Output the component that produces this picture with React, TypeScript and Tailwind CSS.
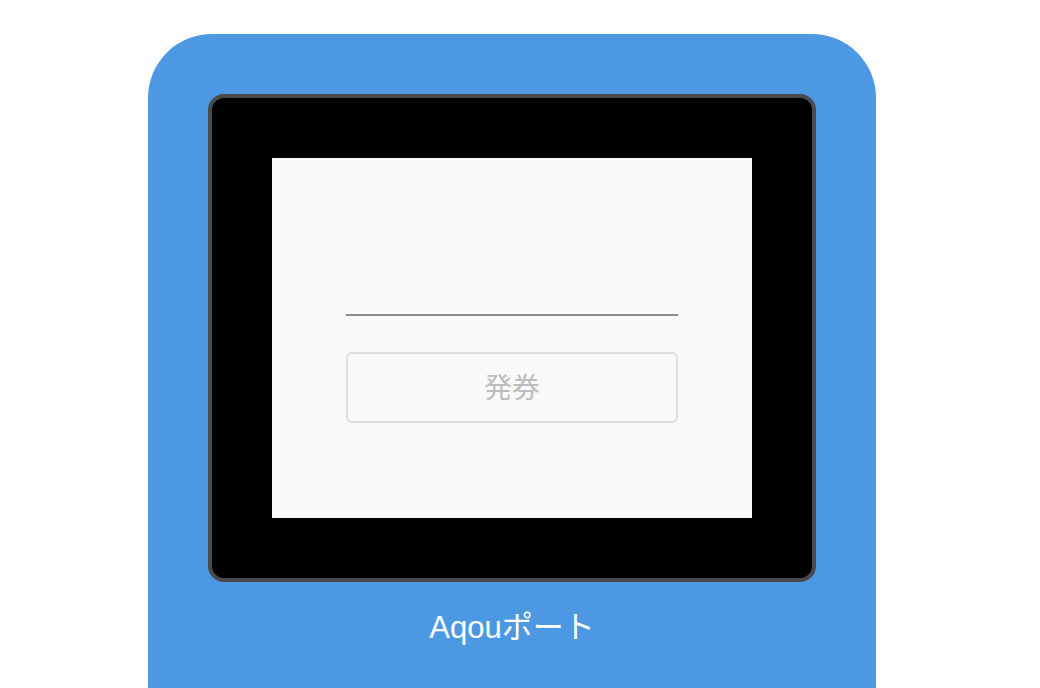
export default function App() {
  return (
    <div className="h-[688px] w-[1040px] overflow-hidden bg-white">
      <div className="ml-[148px] mt-[34px] w-[728px] h-[700px] rounded-t-[64px] bg-[#4c98e2] p-[60px] font-['Noto_Sans_CJK_JP',sans-serif]">
        {/* Screen frame */}
        <div className="w-[608px] h-[488px] rounded-[16px] border-4 border-[#4a4a4a] bg-black p-[60px]">
          <div className="w-[480px] h-[360px] bg-[#f9f9f9] flex flex-col items-center justify-center">
            <input
              type="text"
              className="w-[332px] h-[63px] bg-transparent border-b-2 border-[#8c8c8c] outline-none"
              aria-label="番号"
            />
            <button
              disabled
              className="mt-9 w-[332px] h-[71px] rounded-[6px] border-2 border-[#dddddd] pb-[4px] text-[28px] text-[#bdbdbd] flex items-center justify-center"
            >
              発券
            </button>
          </div>
        </div>
        <div className="mt-[26px] text-center text-white text-[31px] leading-[40px] font-['Liberation_Sans','Noto_Sans_CJK_JP',sans-serif]">
          Aqouポート
        </div>
      </div>
    </div>
  );
}
